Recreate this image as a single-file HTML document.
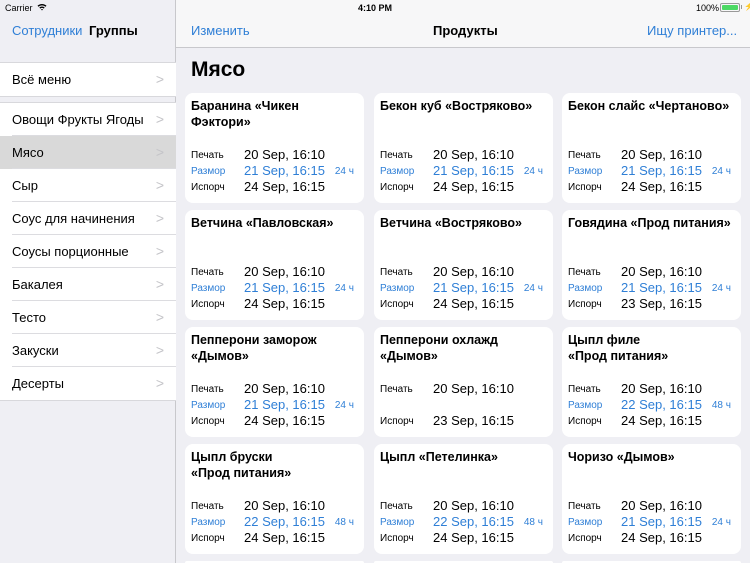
<!DOCTYPE html>
<html><head><meta charset="utf-8"><style>
*{margin:0;padding:0;box-sizing:border-box}
html,body{width:750px;height:563px;overflow:hidden}
body{background:#efeff4;font-family:"Liberation Sans","Noto Sans CJK SC",sans-serif;position:relative;color:#000}
.a{position:absolute;white-space:nowrap}
.blue{color:#2f7fd6}
#side{position:absolute;left:0;top:0;width:176px;height:563px;background:#efeff4;border-right:1px solid #c8c8cc}
#bar{position:absolute;left:0;top:0;width:750px;height:48px;background:#f7f7f8;border-bottom:1px solid #c8c8cc}
.sec{position:absolute;left:0;width:176px;background:#fff;border-top:1px solid #d8d8dc;border-bottom:1px solid #d8d8dc}
.row{position:relative;height:33px;line-height:33px;padding-left:12px;font-size:13px}
.row:after{content:"";position:absolute;left:12px;right:0;bottom:0;border-bottom:1px solid #dcdce0}
.row:last-child:after{display:none}
.row .ch{position:absolute;right:12px;top:0;color:#c4c4c8;font-size:14px}
.sel{background:#d9d9d9}
.card{position:absolute;width:179px;height:110px;background:#fff;border-radius:8px}
.card .t{position:absolute;left:6px;top:5px;font-size:12.5px;font-weight:bold;line-height:16px;width:170px}
.card .l{position:absolute;left:6px;font-size:10px;line-height:12px}
.card .v{position:absolute;left:59px;font-size:13px;line-height:16px}
.card .h{position:absolute;right:10px;font-size:10px;line-height:12px}
</style></head><body>
<div id="bar"></div>
<div id="side"></div>
<div class="a" style="left:5px;top:3px;font-size:9px">Carrier</div>
<svg class="a" style="left:37px;top:3px" width="10" height="8" viewBox="0 0 10 8"><path d="M0.5 2.8A6.5 6.5 0 0 1 9.5 2.8L8.5 3.8A5 5 0 0 0 1.5 3.8Z M2.3 4.6A4 4 0 0 1 7.7 4.6L6.7 5.6A2.6 2.6 0 0 0 3.3 5.6Z M4 6.4A1.5 1.5 0 0 1 6 6.4L5 7.5Z" fill="#000"/></svg>
<div class="a" style="left:358px;top:3px;font-size:9px;font-weight:bold">4:10 PM</div>
<div class="a" style="left:696px;top:3px;font-size:9px">100%</div>
<div class="a" style="left:720px;top:3px;width:20px;height:9px;border:1px solid #999;border-radius:2px;padding:1px"><div style="width:100%;height:100%;background:#4cd964;border-radius:1px"></div></div>
<div class="a" style="left:741px;top:5px;width:1px;height:4px;background:#999"></div>
<div class="a" style="left:744px;top:2px;font-size:8px">⚡</div>

<div class="a blue" style="left:12px;top:23px;font-size:13px">Сотрудники</div>
<div class="a" style="left:89px;top:23px;font-size:13px;font-weight:bold">Группы</div>
<div class="a blue" style="left:191px;top:23px;font-size:13px">Изменить</div>
<div class="a" style="left:433px;top:23px;font-size:13px;font-weight:bold">Продукты</div>
<div class="a blue" style="left:647px;top:23px;font-size:13px">Ищу принтер...</div>

<div class="sec" style="top:62px"><div class="row">Всё меню<span class="ch">&gt;</span></div></div>
<div class="sec" style="top:102px">
<div class="row">Овощи Фрукты Ягоды<span class="ch">&gt;</span></div>
<div class="row sel">Мясо<span class="ch">&gt;</span></div>
<div class="row">Сыр<span class="ch">&gt;</span></div>
<div class="row">Соус для начинения<span class="ch">&gt;</span></div>
<div class="row">Соусы порционные<span class="ch">&gt;</span></div>
<div class="row">Бакалея<span class="ch">&gt;</span></div>
<div class="row">Тесто<span class="ch">&gt;</span></div>
<div class="row">Закуски<span class="ch">&gt;</span></div>
<div class="row">Десерты<span class="ch">&gt;</span></div>
</div>

<div class="a" style="left:191px;top:58px;font-size:21px;font-weight:bold">Мясо</div>

<div class="card" style="left:185px;top:93px"><div class="t">Баранина «Чикен Фэктори»</div>
<div class="l" style="top:57px">Печать</div><div class="v" style="top:54px">20 Sep, 16:10</div>
<div class="l blue" style="top:73px">Размор</div><div class="v blue" style="top:70px">21 Sep, 16:15</div><div class="h blue" style="top:73px">24 ч</div>
<div class="l" style="top:89px">Испорч</div><div class="v" style="top:86px">24 Sep, 16:15</div></div>
<div class="card" style="left:374px;top:93px"><div class="t">Бекон куб «Востряково»</div>
<div class="l" style="top:57px">Печать</div><div class="v" style="top:54px">20 Sep, 16:10</div>
<div class="l blue" style="top:73px">Размор</div><div class="v blue" style="top:70px">21 Sep, 16:15</div><div class="h blue" style="top:73px">24 ч</div>
<div class="l" style="top:89px">Испорч</div><div class="v" style="top:86px">24 Sep, 16:15</div></div>
<div class="card" style="left:562px;top:93px"><div class="t">Бекон слайс «Чертаново»</div>
<div class="l" style="top:57px">Печать</div><div class="v" style="top:54px">20 Sep, 16:10</div>
<div class="l blue" style="top:73px">Размор</div><div class="v blue" style="top:70px">21 Sep, 16:15</div><div class="h blue" style="top:73px">24 ч</div>
<div class="l" style="top:89px">Испорч</div><div class="v" style="top:86px">24 Sep, 16:15</div></div>

<div class="card" style="left:185px;top:210px"><div class="t">Ветчина «Павловская»</div>
<div class="l" style="top:57px">Печать</div><div class="v" style="top:54px">20 Sep, 16:10</div>
<div class="l blue" style="top:73px">Размор</div><div class="v blue" style="top:70px">21 Sep, 16:15</div><div class="h blue" style="top:73px">24 ч</div>
<div class="l" style="top:89px">Испорч</div><div class="v" style="top:86px">24 Sep, 16:15</div></div>
<div class="card" style="left:374px;top:210px"><div class="t">Ветчина «Востряково»</div>
<div class="l" style="top:57px">Печать</div><div class="v" style="top:54px">20 Sep, 16:10</div>
<div class="l blue" style="top:73px">Размор</div><div class="v blue" style="top:70px">21 Sep, 16:15</div><div class="h blue" style="top:73px">24 ч</div>
<div class="l" style="top:89px">Испорч</div><div class="v" style="top:86px">24 Sep, 16:15</div></div>
<div class="card" style="left:562px;top:210px"><div class="t">Говядина «Прод питания»</div>
<div class="l" style="top:57px">Печать</div><div class="v" style="top:54px">20 Sep, 16:10</div>
<div class="l blue" style="top:73px">Размор</div><div class="v blue" style="top:70px">21 Sep, 16:15</div><div class="h blue" style="top:73px">24 ч</div>
<div class="l" style="top:89px">Испорч</div><div class="v" style="top:86px">23 Sep, 16:15</div></div>

<div class="card" style="left:185px;top:327px"><div class="t">Пепперони заморож «Дымов»</div>
<div class="l" style="top:57px">Печать</div><div class="v" style="top:54px">20 Sep, 16:10</div>
<div class="l blue" style="top:73px">Размор</div><div class="v blue" style="top:70px">21 Sep, 16:15</div><div class="h blue" style="top:73px">24 ч</div>
<div class="l" style="top:89px">Испорч</div><div class="v" style="top:86px">24 Sep, 16:15</div></div>
<div class="card" style="left:374px;top:327px"><div class="t">Пепперони охлажд «Дымов»</div>
<div class="l" style="top:57px">Печать</div><div class="v" style="top:54px">20 Sep, 16:10</div>
<div class="l" style="top:89px">Испорч</div><div class="v" style="top:86px">23 Sep, 16:15</div></div>
<div class="card" style="left:562px;top:327px"><div class="t">Цыпл филе<br>«Прод питания»</div>
<div class="l" style="top:57px">Печать</div><div class="v" style="top:54px">20 Sep, 16:10</div>
<div class="l blue" style="top:73px">Размор</div><div class="v blue" style="top:70px">22 Sep, 16:15</div><div class="h blue" style="top:73px">48 ч</div>
<div class="l" style="top:89px">Испорч</div><div class="v" style="top:86px">24 Sep, 16:15</div></div>

<div class="card" style="left:185px;top:444px"><div class="t">Цыпл бруски<br>«Прод питания»</div>
<div class="l" style="top:57px">Печать</div><div class="v" style="top:54px">20 Sep, 16:10</div>
<div class="l blue" style="top:73px">Размор</div><div class="v blue" style="top:70px">22 Sep, 16:15</div><div class="h blue" style="top:73px">48 ч</div>
<div class="l" style="top:89px">Испорч</div><div class="v" style="top:86px">24 Sep, 16:15</div></div>
<div class="card" style="left:374px;top:444px"><div class="t">Цыпл «Петелинка»</div>
<div class="l" style="top:57px">Печать</div><div class="v" style="top:54px">20 Sep, 16:10</div>
<div class="l blue" style="top:73px">Размор</div><div class="v blue" style="top:70px">22 Sep, 16:15</div><div class="h blue" style="top:73px">48 ч</div>
<div class="l" style="top:89px">Испорч</div><div class="v" style="top:86px">24 Sep, 16:15</div></div>
<div class="card" style="left:562px;top:444px"><div class="t">Чоризо «Дымов»</div>
<div class="l" style="top:57px">Печать</div><div class="v" style="top:54px">20 Sep, 16:10</div>
<div class="l blue" style="top:73px">Размор</div><div class="v blue" style="top:70px">21 Sep, 16:15</div><div class="h blue" style="top:73px">24 ч</div>
<div class="l" style="top:89px">Испорч</div><div class="v" style="top:86px">24 Sep, 16:15</div></div>

<div class="card" style="left:185px;top:561px;height:2px;border-radius:8px 8px 0 0"></div>
<div class="card" style="left:374px;top:561px;height:2px;border-radius:8px 8px 0 0"></div>
<div class="card" style="left:562px;top:561px;height:2px;border-radius:8px 8px 0 0"></div>
</body></html>
